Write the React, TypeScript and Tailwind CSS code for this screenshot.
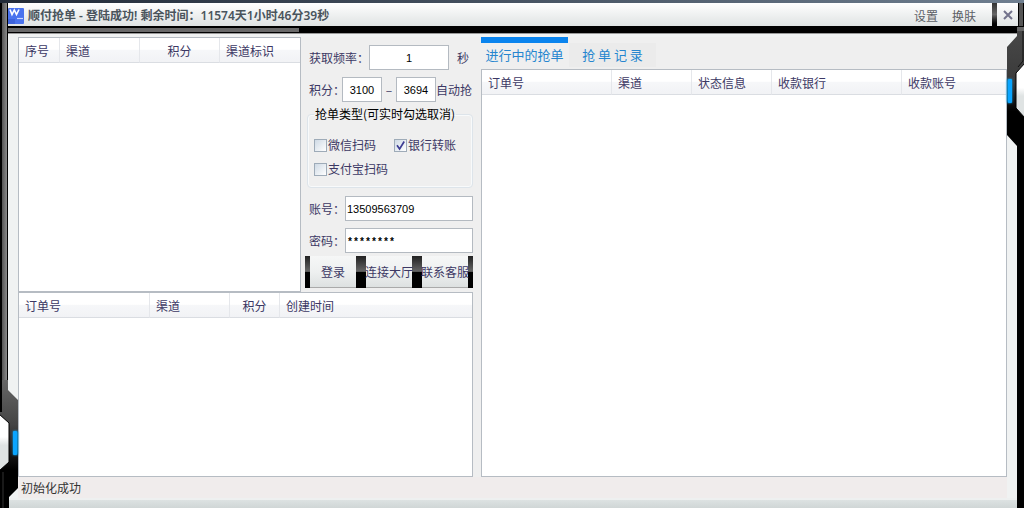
import React from "react";

type Column = { label: string; width?: string; center?: boolean };

const channelColumns: Column[] = [
  { label: "序号", width: "w-[41px]" },
  { label: "渠道", width: "w-20" },
  { label: "积分", width: "w-20", center: true },
  { label: "渠道标识" },
];

const createdColumns: Column[] = [
  { label: "订单号", width: "w-[131px]" },
  { label: "渠道", width: "w-20" },
  { label: "积分", width: "w-[50px]", center: true },
  { label: "创建时间" },
];

const activeColumns: Column[] = [
  { label: "订单号", width: "w-[130px]" },
  { label: "渠道", width: "w-20" },
  { label: "状态信息", width: "w-20" },
  { label: "收款银行", width: "w-[130px]" },
  { label: "收款账号" },
];

function Grid({ columns, name, className }: { columns: Column[]; name: string; className: string }) {
  return (
    <div className={`border border-[#b6bcc3] bg-white ${className}`}>
      <table aria-label={name} className="w-full table-fixed border-separate border-spacing-0">
        <thead>
          <tr className="h-[25px] bg-linear-to-b from-white from-45% via-[#f6f7f9] via-50% to-[#f1f2f5]">
            {columns.map((c) => (
              <th
                key={c.label}
                scope="col"
                className={`border-r border-b border-r-[#e5e7eb] border-b-[#dadde2] px-0 pt-0.5 pb-0 font-normal whitespace-nowrap last:border-r-0 ${c.width ?? ""} ${c.center ? "text-center" : "pl-1.5 text-left"}`}
              >
                {c.label}
              </th>
            ))}
          </tr>
        </thead>
      </table>
    </div>
  );
}

const inputStyle = "h-[25px] min-w-0 border border-[#b4bac1] bg-white px-px text-black outline-none";
const digitStyle = "font-['Liberation_Sans',sans-serif] text-[11px]";
const secretStyle = "pt-1 font-['Liberation_Mono',monospace] text-[10px] font-bold";

function Check({ label, checked }: { label: string; checked?: boolean }) {
  return (
    <label className="flex h-6 items-center gap-px whitespace-nowrap">
      <span className="grid size-[13px] shrink-0">
        <input
          type="checkbox"
          defaultChecked={checked}
          className="peer col-start-1 row-start-1 size-[13px] appearance-none border border-[#9eabb8] bg-linear-to-br from-[#cfdae5] to-white"
        />
        <svg viewBox="0 0 13 13" className="pointer-events-none col-start-1 row-start-1 size-[13px] opacity-0 peer-checked:opacity-100">
          <path d="M3 6.2 5.6 10 10.2 2.5" fill="none" stroke="#3d3d94" strokeWidth="1.7" />
        </svg>
      </span>
      {label}
    </label>
  );
}

function SkinButton({ children }: { children: React.ReactNode }) {
  return (
    <button
      type="button"
      className="flex h-8 flex-1 items-stretch bg-linear-to-b from-[#f6f7f7] via-[#eef0f0] to-[#dce0e0]"
    >
      <span className="w-[5px] shrink-0 bg-linear-to-b from-[#222] via-[#666] via-48% to-black to-52%" />
      <span className="flex w-0 flex-1 items-center justify-center border-b border-[#aaa] whitespace-nowrap">
        <span className="z-10">{children}</span>
      </span>
      <span className="w-[5px] shrink-0 bg-linear-to-b from-[#222] via-[#666] via-48% to-black to-52%" />
    </button>
  );
}

function AppLogo() {
  return (
    <svg viewBox="0 0 16 16" className="size-4 shrink-0" aria-hidden="true">
      <rect width="16" height="16" rx="1" fill="#4a73ee" />
      <path d="M2 1.5 4 6.5 6.3 2 8.5 6.5 11 1.5" fill="none" stroke="#fff" strokeWidth="1.6" />
      <path d="M9 10.5h6" stroke="#c9d6ff" strokeWidth="1.2" />
      <path d="M0 11h7v5H0z" fill="#3d63dc" />
    </svg>
  );
}

function RightOrnament() {
  return (
    <svg viewBox="0 0 20 134" className="pointer-events-none absolute top-[26px] right-0 h-[134px] w-5" aria-hidden="true">
      <defs>
        <linearGradient id="railR" x1="0" y1="0" x2="0" y2="1">
          <stop offset="0" stopColor="#484848" />
          <stop offset=".45" stopColor="#3a3a3a" />
          <stop offset=".7" stopColor="#000" />
        </linearGradient>
        <linearGradient id="gemR" x1="0" y1="0" x2="0" y2="1">
          <stop offset=".45" stopColor="#fff" />
          <stop offset=".6" stopColor="#dfe3e3" />
        </linearGradient>
        <filter id="glowR" x="-1" y="-.2" width="3" height="1.4">
          <feGaussianBlur stdDeviation=".8" />
        </filter>
      </defs>
      <path d="M13 10 3 21v88l10 11h7V5h-7z" fill="url(#railR)" />
      <path d="M13 120h7v14h-7z" fill="#000" />
      <path d="M13 1h7v4h-7z" fill="#666" />
      <path d="M19 5v30l-5 6" fill="none" stroke="#111" />
      <path d="M21 37 12 47v35l9 10z" fill="url(#gemR)" stroke="#000" />
      <rect x="3" y="53" width="5" height="24" rx="1" fill="#0af" filter="url(#glowR)" />
      <rect x="4" y="53" width="4" height="24" rx="1" fill="#0aa5ff" />
    </svg>
  );
}

function LeftOrnament() {
  return (
    <svg viewBox="0 0 20 128" className="pointer-events-none absolute bottom-0 left-0 h-32 w-5" aria-hidden="true">
      <defs>
        <linearGradient id="railL" x1="0" y1="0" x2="0" y2="1">
          <stop offset="0" stopColor="#666" />
          <stop offset=".35" stopColor="#444" />
          <stop offset=".7" stopColor="#000" />
        </linearGradient>
        <linearGradient id="gemL" x1="0" y1="0" x2="0" y2="1">
          <stop offset=".4" stopColor="#fff" />
          <stop offset=".55" stopColor="#dfe3e3" />
        </linearGradient>
        <filter id="glowL" x="-1" y="-.2" width="3" height="1.4">
          <feGaussianBlur stdDeviation=".8" />
        </filter>
      </defs>
      <path d="M2 0h6v10l10 10v88l-9 9v11H0V32z" fill="url(#railL)" />
      <path d="M0 0h2v32H0z" fill="#000" />
      <path d="M-1 34 9 43v39l-10 9z" fill="url(#gemL)" stroke="#000" />
      <path d="M3 128V92" fill="none" stroke="#333" />
      <rect x="13" y="51" width="5" height="24" rx="1" fill="#0af" filter="url(#glowL)" />
      <rect x="13" y="51" width="4" height="24" rx="1" fill="#0aa5ff" />
    </svg>
  );
}

export default function App() {
  return (
    <div className="relative flex min-h-screen flex-col bg-black font-['Noto_Sans_CJK_SC',sans-serif] text-xs leading-4 text-[#3c3864]">
      <div className="h-[3px] bg-linear-to-r from-[#222b38] to-[#6f7f90]" />

      <div className="flex flex-1">
        <div className="w-2 shrink-0 border-r border-l-2 border-black bg-linear-to-r from-[#555] to-[#8a8a8a]" />

        <div className="flex min-w-0 flex-1 flex-col">
          <header className="flex h-[23px] items-stretch">
            <div className="flex flex-1 items-center gap-1 bg-linear-to-b from-white to-[#dfe3e3] pt-1 pr-4 pb-0.5">
              <AppLogo />
              <h1 className="flex-1 font-['Noto_Sans','Noto_Sans_CJK_SC',sans-serif] text-xs font-semibold whitespace-nowrap text-[#4a545c]">
                顺付抢单 - 登陆成功! 剩余时间：11574天1小时46分39秒
              </h1>
              <nav className="flex gap-3.5 text-[#5c6066]">
                <button type="button">设置</button>
                <button type="button">换肤</button>
              </nav>
            </div>
            <span className="w-[5px] bg-linear-to-b from-[#333] via-[#666] to-black" />
            <button type="button" aria-label="关闭" className="flex w-[21px] items-center justify-center bg-linear-to-b from-white to-[#dfe3e3]">
              <svg viewBox="0 0 10 10" className="size-2.5">
                <path d="m1 1 8 8M9 1 1 9" stroke="#73738c" strokeWidth="2" />
              </svg>
            </button>
            <span className="w-1.5 border-x border-black bg-[#555]" />
          </header>

          <div className="flex h-[7px] items-center">
            <span className="h-1 w-[291px] bg-[#696969]" />
          </div>

          <main className="mr-[7px] flex flex-1 flex-col border-t border-[#999] bg-[#f0f2f2] px-2.5">
            <div className="h-[3px]" />
            <div className="flex flex-1 bg-[#efefef]">
              <div className="flex w-[455px] shrink-0 flex-col">
                <div className="flex h-[255px]">
                  <Grid columns={channelColumns} name="渠道列表" className="w-[283px] shrink-0" />

                  <form className="flex min-w-0 flex-1 flex-col pl-1" onSubmit={(e) => e.preventDefault()}>
                    <div className="flex items-center pt-2 pl-1">
                      <label htmlFor="rate" className="w-[60px] whitespace-nowrap">获取频率：</label>
                      <input id="rate" defaultValue="1" className={`w-20 text-center ${inputStyle} ${digitStyle}`} />
                      <span className="pl-2">秒</span>
                    </div>
                    <div className="flex items-center pt-[7px] pl-1 whitespace-nowrap">
                      <label htmlFor="min" className="w-[33px]">积分：</label>
                      <input id="min" defaultValue="3100" className={`w-10 text-center ${inputStyle} ${digitStyle}`} />
                      <span className="w-3.5 text-center">–</span>
                      <input aria-label="积分上限" defaultValue="3694" className={`w-10 text-center ${inputStyle} ${digitStyle}`} />
                      <span>自动抢</span>
                    </div>

                    <fieldset className="mt-1 ml-0.5 rounded-sm border border-[#dde4ea] pt-2.5 pb-1.5 pl-1.5 shadow-[inset_0_0_0_1px_#f8fafb]">
                      <legend className="px-px whitespace-nowrap text-black">抢单类型(可实时勾选取消)</legend>
                      <div className="grid grid-cols-[80px_1fr] pt-px">
                        <Check label="微信扫码" />
                        <Check label="银行转账" checked />
                        <Check label="支付宝扫码" />
                      </div>
                    </fieldset>

                    <div className="flex items-center pt-2 pl-1">
                      <label htmlFor="account" className="w-9 whitespace-nowrap">账号：</label>
                      <input id="account" defaultValue="13509563709" className={`flex-1 ${inputStyle} ${digitStyle}`} />
                    </div>
                    <div className="flex items-center pt-[7px] pb-[3px] pl-1">
                      <label htmlFor="password" className="w-9 whitespace-nowrap">密码：</label>
                      <input id="password" autoComplete="off" defaultValue="********" className={`flex-1 ${inputStyle} ${secretStyle}`} />
                    </div>
                    <div className="flex">
                      <SkinButton>登录</SkinButton>
                      <SkinButton>连接大厅</SkinButton>
                      <SkinButton>联系客服</SkinButton>
                    </div>
                  </form>
                </div>

                <Grid columns={createdColumns} name="已创建订单" className="flex-1" />
              </div>

              <div className="ml-2 flex min-w-0 flex-1 flex-col">
                <div role="tablist" className="flex h-8 items-start gap-px text-[13px] text-[#2586cf]">
                  <button type="button" role="tab" aria-selected="true" className="h-[30px] w-[87px] border-t-[6px] border-[#0a84ee] whitespace-nowrap">
                    进行中的抢单
                  </button>
                  <button type="button" role="tab" aria-selected="false" className="mt-1.5 h-6 w-[87px] bg-[#ebebeb] whitespace-nowrap">
                    抢 单 记 录
                  </button>
                </div>
                <Grid columns={activeColumns} name="进行中的抢单" className="flex-1" />
              </div>
            </div>

            <footer role="status" className="h-[21px] bg-[#f0ecec] pt-[3px] pl-[3px] text-[#333]">初始化成功</footer>
            <div className="-mx-2.5 h-2.5 border-t-2 border-[#eef0f0] bg-linear-to-b from-[#dde2e2] to-[#d0d6d6]" />
          </main>
        </div>
      </div>

      <LeftOrnament />
      <RightOrnament />
    </div>
  );
}
